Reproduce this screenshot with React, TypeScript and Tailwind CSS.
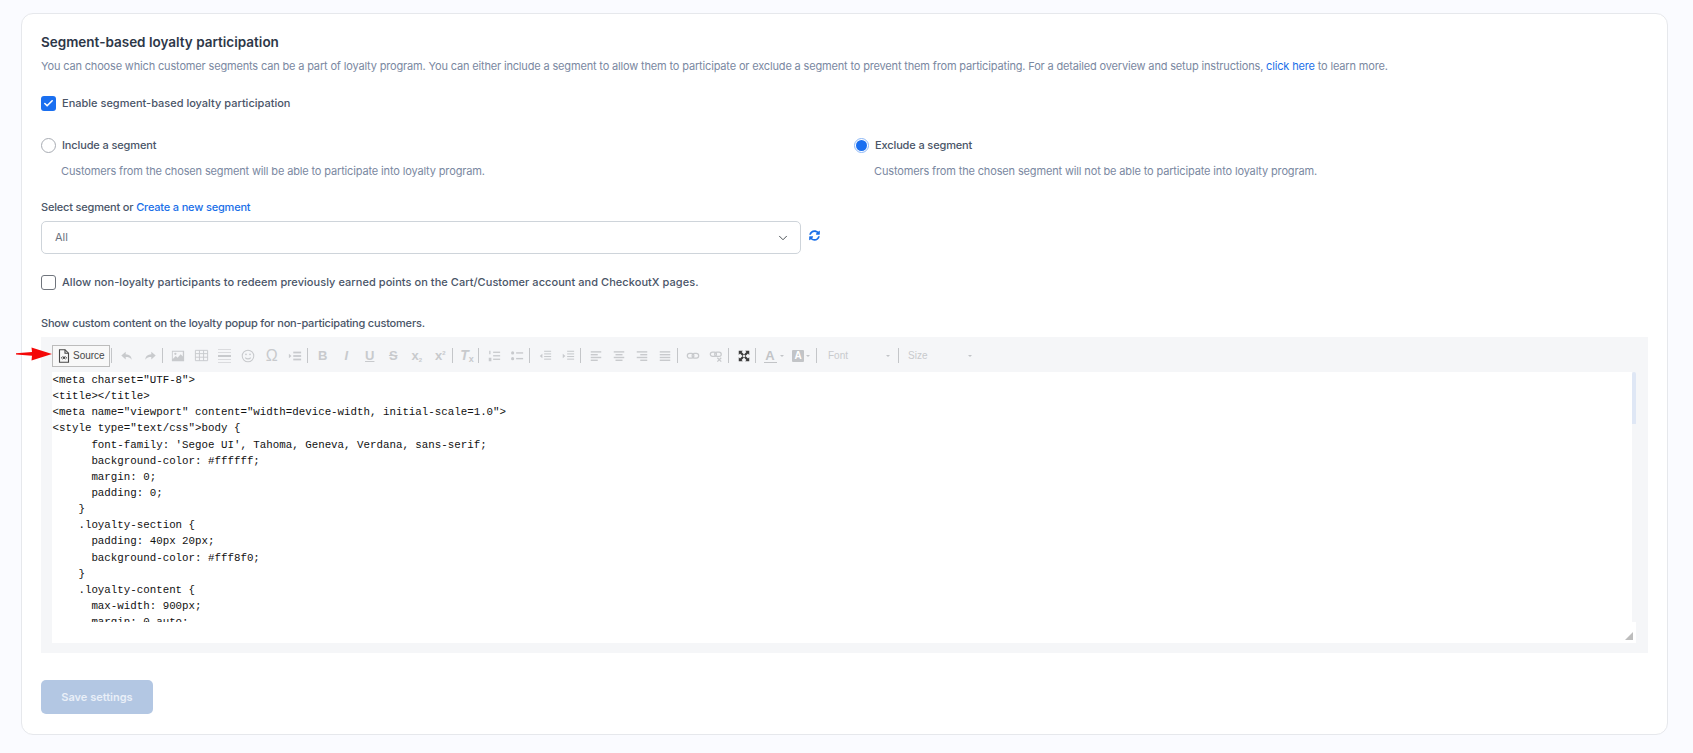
import type { ReactNode } from "react";
import { Check, ChevronDown } from "lucide-react";
import { FaSyncAlt } from "react-icons/fa";

const SOURCE = `<meta charset="UTF-8">
<title></title>
<meta name="viewport" content="width=device-width, initial-scale=1.0">
<style type="text/css">body {
      font-family: 'Segoe UI', Tahoma, Geneva, Verdana, sans-serif;
      background-color: #ffffff;
      margin: 0;
      padding: 0;
    }
    .loyalty-section {
      padding: 40px 20px;
      background-color: #fff8f0;
    }
    .loyalty-content {
      max-width: 900px;
      margin: 0 auto;`;

function Sep() {
  return <span className="w-px h-[15px] bg-[#c4c6c9] mr-[3px] shrink-0" />;
}

function Btn({ children, w = "w-[23.5px]" }: { children: ReactNode; w?: string }) {
  return <span className={`${w} h-[16px] flex items-center justify-center shrink-0 text-[#c8cacd]`}>{children}</span>;
}

function Ico({ children }: { children: ReactNode }) {
  return (
    <svg width="14" height="14" viewBox="0 0 16 16" fill="currentColor">
      {children}
    </svg>
  );
}

function Glyph({ children, className }: { children: ReactNode; className: string }) {
  return <span className={`font-['Liberation_Sans',sans-serif] leading-none ${className}`}>{children}</span>;
}

function Caret() {
  return <span className="w-0 h-0 border-x-[2px] border-t-[2px] border-x-transparent border-t-[#c2c4c7] shrink-0" />;
}

// line stacks used by the alignment buttons
function Rows({ rows }: { rows: [number, number][] }) {
  return (
    <Ico>
      {rows.map(([x, w], i) => (
        <rect key={i} x={x} y={2.5 + i * 3.2} width={w} height="1.6" />
      ))}
    </Ico>
  );
}

function Toolbar() {
  return (
    <div className="h-[35px] pl-[11px] pt-[2px] flex items-center relative">
      <span className="h-[22px] w-[58px] border border-[#bcbcbc] bg-[#f8f8f8] flex items-center pl-[5px] gap-[3px] shrink-0 mr-px">
        <svg width="12" height="14" viewBox="0 0 12 14" fill="none" stroke="#474747" strokeWidth="1.1">
          <path d="M1.5 .7h5.5l3.5 3.5v9h-9z" />
          <path d="M7 .7v3.5h3.5" />
          <circle cx="6" cy="8.8" r="1.3" fill="#474747" stroke="none" />
          <path d="M3.2 8.8 4.6 7.4M3.2 8.8l1.4 1.4M8.8 8.8 7.4 7.4M8.8 8.8l-1.4 1.4" strokeWidth=".8" />
        </svg>
        <span className="text-[10px] text-[#474747] font-['Liberation_Sans',sans-serif]">Source</span>
      </span>
      <Sep />
      <Btn>
        <Ico><path d="M6.5 3 1.5 7.5l5 4.5V9.2c3 0 5 .6 6.8 3 0-3.8-2.6-6-6.8-6.2z" /></Ico>
      </Btn>
      <Btn>
        <Ico><path d="m9.5 3 5 4.5-5 4.5V9.2c-3 0-5 .6-6.8 3 0-3.8 2.6-6 6.8-6.2z" /></Ico>
      </Btn>
      <Sep />
      <Btn>
        <Ico>
          <path fillRule="evenodd" d="M1 2h14v12H1zm1 1v8.5l3.5-3.5 2 2 3.5-4 2.5 2.5V3z" />
          <circle cx="5" cy="5.5" r="1.3" />
        </Ico>
      </Btn>
      <Btn>
        <svg width="15" height="15" viewBox="0 0 16 16" fill="none" stroke="currentColor">
          <path d="M1.5 2.5h13v11h-13zM1.5 6h13M1.5 9.8h13M5.8 2.5v11M10.2 2.5v11" />
        </svg>
      </Btn>
      <Btn>
        <svg width="13" height="16" viewBox="0 0 13 16" fill="currentColor">
          <rect y="1" width="13" height="1" opacity=".6" />
          <rect y="4" width="13" height="1" opacity=".6" />
          <rect y="7" width="13" height="2" />
          <rect y="11" width="13" height="1" opacity=".6" />
          <rect y="14" width="13" height="1" opacity=".6" />
        </svg>
      </Btn>
      <Btn>
        <svg width="14" height="14" viewBox="0 0 16 16" fill="none" stroke="currentColor" strokeWidth="1.2">
          <circle cx="8" cy="8" r="6.6" />
          <path d="M4.8 9.8c1.6 2 4.8 2 6.4 0" />
          <circle cx="5.7" cy="6" r="1" fill="currentColor" stroke="none" />
          <circle cx="10.3" cy="6" r="1" fill="currentColor" stroke="none" />
        </svg>
      </Btn>
      <Btn><Glyph className="text-[16px]">Ω</Glyph></Btn>
      <Btn>
        <Ico>
          <path d="M1 5.5 4 8l-3 2.5z" />
          <rect x="6" y="3" width="9" height="2" />
          <rect x="6" y="7" width="9" height="2" />
          <rect x="6" y="11" width="9" height="2" />
        </Ico>
      </Btn>
      <Sep />
      <Btn><Glyph className="text-[13px] font-bold">B</Glyph></Btn>
      <Btn><Glyph className="text-[13px] font-bold italic">I</Glyph></Btn>
      <Btn><Glyph className="text-[13px] font-bold underline">U</Glyph></Btn>
      <Btn><Glyph className="text-[13px] font-bold line-through">S</Glyph></Btn>
      <Btn><Glyph className="text-[13px] font-bold">x<span className="text-[6px] align-[-2px]">2</span></Glyph></Btn>
      <Btn><Glyph className="text-[13px] font-bold">x<span className="text-[6px] align-[5px]">2</span></Glyph></Btn>
      <Sep />
      <Btn w="w-[22px]"><Glyph className="text-[14px] font-bold italic">T<span className="text-[9px] not-italic align-[-2px]">x</span></Glyph></Btn>
      <Sep />
      <Btn>
        <Ico>
          <rect x="2.5" y="2" width="1.5" height="4" />
          <rect x="2" y="10" width="3" height="4" />
          <rect x="7" y="3" width="8" height="1.5" />
          <rect x="7" y="7" width="8" height="1.5" />
          <rect x="7" y="11" width="8" height="1.5" />
        </Ico>
      </Btn>
      <Btn>
        <Ico>
          <circle cx="3" cy="4.5" r="1.8" />
          <circle cx="3" cy="11" r="1.8" />
          <rect x="7" y="3.7" width="8" height="1.6" />
          <rect x="7" y="10.2" width="8" height="1.6" />
        </Ico>
      </Btn>
      <Sep />
      <Btn>
        <Ico>
          <path d="M5 5.5 2 8l3 2.5z" />
          <rect x="7" y="2" width="8" height="1.2" />
          <rect x="7" y="5" width="8" height="1.2" />
          <rect x="7" y="8" width="8" height="1.2" />
          <rect x="7" y="11" width="8" height="1.2" />
        </Ico>
      </Btn>
      <Btn>
        <Ico>
          <path d="m2 5.5 3 2.5-3 2.5z" />
          <rect x="7" y="2" width="8" height="1.2" />
          <rect x="7" y="5" width="8" height="1.2" />
          <rect x="7" y="8" width="8" height="1.2" />
          <rect x="7" y="11" width="8" height="1.2" />
        </Ico>
      </Btn>
      <Sep />
      <Btn w="w-[23.25px]"><Rows rows={[[2, 12], [2, 8], [2, 12], [2, 8]]} /></Btn>
      <Btn w="w-[23.25px]"><Rows rows={[[2, 12], [4, 8], [2, 12], [4, 8]]} /></Btn>
      <Btn w="w-[23.25px]"><Rows rows={[[2, 12], [6, 8], [2, 12], [6, 8]]} /></Btn>
      <Btn w="w-[23.25px]"><Rows rows={[[2, 12], [2, 12], [2, 12], [2, 12]]} /></Btn>
      <Sep />
      <Btn>
        <svg width="14" height="14" viewBox="0 0 16 16" fill="none" stroke="currentColor" strokeWidth="1.4">
          <rect x="1.5" y="5" width="7.5" height="5.5" rx="2.7" />
          <rect x="7" y="5" width="7.5" height="5.5" rx="2.7" />
        </svg>
      </Btn>
      <Btn>
        <svg width="14" height="14" viewBox="0 0 16 16" fill="none" stroke="currentColor" strokeWidth="1.4">
          <rect x="1.5" y="3.5" width="7" height="5" rx="2.5" />
          <rect x="6.5" y="3.5" width="7.5" height="5" rx="2.5" />
          <path d="m9.5 10 4.5 4.5M14 10l-4.5 4.5" />
        </svg>
      </Btn>
      <Sep />
      <Btn w="w-[23px]">
        <svg width="12" height="12" viewBox="0 0 16 16" fill="#3c3c3c">
          <path d="M1 1h5.5L4.8 2.7 8 6 6 8 2.7 4.8 1 6.5zM15 1v5.5l-1.7-1.7L10 8 8 6l3.2-3.3L9.5 1zM1 15V9.5l1.7 1.7L6 8l2 2-3.2 3.3L6.5 15zM15 15H9.5l1.7-1.7L8 10l2-2 3.3 3.2L15 9.5z" />
        </svg>
      </Btn>
      <Sep />
      <span className="w-[28.5px] pr-[4px] flex items-center justify-end gap-[3px] shrink-0">
        <span className="font-['Liberation_Sans',sans-serif] font-bold text-[13px] leading-[13px] text-center text-[#c2c4c7] border-b border-[#c2c4c7] w-[13px]">A</span>
        <Caret />
      </span>
      <span className="w-[28.5px] pr-[6px] flex items-center justify-end gap-[2px] shrink-0">
        <span className="w-[12px] h-[12px] bg-[#c2c4c7] rounded-[1px] flex items-center justify-center font-['Liberation_Sans',sans-serif] font-bold text-[10px] leading-none text-white">A</span>
        <Caret />
      </span>
      <Sep />
      <span className="w-[78px] pl-[8px] pr-[8px] flex items-center justify-between text-[10px] text-[#c8cacd] font-['Liberation_Sans',sans-serif] shrink-0">
        Font
        <Caret />
      </span>
      <Sep />
      <span className="w-[70px] pl-[6px] flex items-center justify-between text-[10px] text-[#c8cacd] font-['Liberation_Sans',sans-serif] shrink-0">
        Size
        <Caret />
      </span>
      {/* red annotation arrow pointing at the Source button */}
      <svg className="absolute left-[-25px] top-[10px]" width="36" height="14" viewBox="0 0 36 14" fill="#f40808">
        <path d="M0 6.2 16 5l-.5-4.5L36 7 15.5 13.5l.5-4.7L0 7.4z" />
      </svg>
    </div>
  );
}

function Editor() {
  return (
    <div className="mt-[5px] h-[316px] w-[1607px] bg-[#f5f6f8]">
      <Toolbar />
      <div className="ml-[11px] mr-[12px] h-[271px] bg-white relative">
        <div className="h-[250px] relative">
          <div className="h-full overflow-hidden">
            <pre className="font-['Liberation_Mono',monospace] text-[10.8px] leading-[16.14px] text-[#111] m-0 pl-[0.5px]">{SOURCE}</pre>
          </div>
          <div className="absolute right-0 top-0 bottom-0 w-[4px] bg-[#f5f6f8]">
            <div className="h-[52px] w-full rounded-t-[2px] bg-[#dfe7f5]" />
          </div>
        </div>
        <svg className="absolute right-[3px] bottom-[3px]" width="8" height="8" viewBox="0 0 8 8" fill="#bdbdbd">
          <path d="M8 0v8H0z" />
        </svg>
      </div>
    </div>
  );
}

function Blue({ children }: { children: ReactNode }) {
  return <span className="text-[#1a6fe8]">{children}</span>;
}

function Checkbox({ checked }: { checked?: boolean }) {
  return checked ? (
    <span className="w-[15px] h-[15px] rounded-[3px] bg-[#1a6ff0] flex items-center justify-center shrink-0">
      <Check size={11} color="white" strokeWidth={3.5} />
    </span>
  ) : (
    <span className="w-[15px] h-[15px] rounded-[3px] border border-[#70757d] bg-white shrink-0" />
  );
}

function Radio({ checked }: { checked?: boolean }) {
  return checked ? (
    <span className="w-[15px] h-[15px] rounded-full border border-[#8db8f7] p-[1px] shrink-0">
      <span className="block w-full h-full rounded-full bg-[#1a6ff0]" />
    </span>
  ) : (
    <span className="w-[15px] h-[15px] rounded-full border border-[#a8acb3] bg-white shrink-0" />
  );
}

function RadioOption({ label, hint, checked }: { label: string; hint: string; checked?: boolean }) {
  return (
    <div>
      <div className="flex items-center gap-[6px] h-[15px] text-[11px] font-medium tracking-[-0.13px] text-[#4a5568]">
        <Radio checked={checked} />
        {label}
      </div>
      <p className="mt-[9px] ml-[20px] text-[11px] leading-[18px] tracking-[-0.145px] text-[#7a88a1]">{hint}</p>
    </div>
  );
}

export default function App() {
  return (
    <div className="min-h-screen bg-[#fafbff] pt-[13px] pl-[20.5px] font-['Inter',sans-serif] overflow-hidden">
      <div className="w-[1647.5px] h-[722px] bg-white border border-[#e6e8ec] rounded-[12px] px-[19.5px] pt-[18px]">
        <h1 className="text-[13.5px] leading-[20px] font-semibold text-[#2d3748]">Segment-based loyalty participation</h1>
        <p className="mt-[5px] text-[11px] leading-[18px] tracking-[-0.16px] text-[#7a88a1] whitespace-nowrap">
          You can choose which customer segments can be a part of loyalty program. You can either include a segment to allow them to participate or exclude a segment to prevent them from participating. For a detailed overview and setup instructions, <Blue>click here</Blue> to learn more.
        </p>

        <div className="mt-[21px] flex items-center gap-[6px] h-[15px] text-[11px] font-medium text-[#4a5568]">
          <Checkbox checked />
          Enable segment-based loyalty participation
        </div>

        <div className="mt-[27px] grid grid-cols-[813px_1fr]">
          <RadioOption label="Include a segment" hint="Customers from the chosen segment will be able to participate into loyalty program." />
          <RadioOption checked label="Exclude a segment" hint="Customers from the chosen segment will not be able to participate into loyalty program." />
        </div>

        <p className="mt-[18px] text-[11px] leading-[18px] font-medium tracking-[-0.18px] text-[#4a5568]">
          Select segment or <Blue>Create a new segment</Blue>
        </p>
        <div className="mt-[5px] flex items-center">
          <div className="w-[760px] h-[33px] border border-[#ced4da] rounded-[5px] pl-[13px] pr-[10px] flex items-center justify-between text-[11px] text-[#6b7280]">
            All
            <ChevronDown size={14} color="#343a40" strokeWidth={1.5} />
          </div>
          <FaSyncAlt size={11} color="#1a6fe8" className="ml-[8px] mt-[-5px]" />
        </div>

        <div className="mt-[21px] flex items-center gap-[6px] h-[15px] text-[11px] font-medium tracking-[0.05px] text-[#4a5568]">
          <Checkbox />
          Allow non-loyalty participants to redeem previously earned points on the Cart/Customer account and CheckoutX pages.
        </div>

        <p className="mt-[24px] text-[11px] leading-[18px] font-medium tracking-[-0.2px] text-[#4a5568]">Show custom content on the loyalty popup for non-participating customers.</p>
        <Editor />

        <button className="mt-[27px] w-[112px] h-[34px] rounded-[5px] bg-[#b3c7e3] text-[11px] font-semibold text-[#e9eff8]">Save settings</button>
      </div>
    </div>
  );
}
